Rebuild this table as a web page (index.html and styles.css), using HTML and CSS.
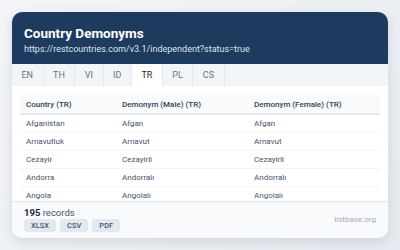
FILE: index.html
```html
<!DOCTYPE html>
<html lang="en">
<head>
    <meta charset="UTF-8">
    <meta name="viewport" content="width=device-width, initial-scale=1.0">
    <title>Country Demonyms</title>
    <link rel="stylesheet" href="styles.css">
</head>
<body>

<div class="card">
    <div class="card-header">
        <h1>Country Demonyms</h1>
        <div class="source-url">https://restcountries.com/v3.1/independent?status=true</div>
    </div>

    <div class="tabs">
        <span class="tab">EN</span>
        <span class="tab">TH</span>
        <span class="tab">VI</span>
        <span class="tab">ID</span>
        <span class="tab active">TR</span>
        <span class="tab">PL</span>
        <span class="tab">CS</span>
    </div>

    <div class="table-wrap">
        <table>
            <thead>
                <tr>
                    <th class="col-country">Country (TR)</th>
                    <th class="col-male">Demonym (Male) (TR)</th>
                    <th>Demonym (Female) (TR)</th>
                </tr>
            </thead>
            <tbody>
                <tr><td>Afganistan</td><td>Afgan</td><td>Afgan</td></tr>
                <tr><td>Arnavutluk</td><td>Arnavut</td><td>Arnavut</td></tr>
                <tr><td>Cezayir</td><td>Cezayirli</td><td>Cezayirli</td></tr>
                <tr><td>Andorra</td><td>Andorralı</td><td>Andorralı</td></tr>
                <tr><td>Angola</td><td>Angolalı</td><td>Angolalı</td></tr>
            </tbody>
        </table>
    </div>

    <div class="card-footer">
        <div class="footer-left">
            <div class="record-count"><b>195</b> records</div>
            <div class="exports">
                <span class="export-btn">XLSX</span>
                <span class="export-btn">CSV</span>
                <span class="export-btn">PDF</span>
            </div>
        </div>
        <span class="brand">listbase.org</span>
    </div>
</div>

</body>
</html>
```

FILE: styles.css
```css
body {
    font-family: Roboto, Arial, sans-serif;
    background: linear-gradient(135deg, #f3f5f8, #e6eaf0);
    margin: 0;
    padding: 12px;
    height: 250px;
    box-sizing: border-box;
}

.card {
    height: 226px;
    display: flex;
    flex-direction: column;
    background-color: #fff;
    border-radius: 10px;
    overflow: hidden;
    box-shadow: 0 4px 12px rgba(30, 41, 59, 0.12);
}

.card-header {
    background-color: #1e3a5f;
    color: #fff;
    padding: 12px 12px 8px;
}

.card-header h1 {
    margin: 0;
    font-size: 13.5px;
    font-weight: 700;
    line-height: 18px;
}

.source-url {
    font-size: 9px;
    line-height: 14px;
    color: #dce5f2;
}

.tabs {
    display: flex;
    height: 22px;
    background-color: #f1f5f9;
}

.tab {
    display: flex;
    align-items: center;
    padding: 0 9.5px;
    font-size: 9px;
    color: #64748b;
    border-right: 1px solid #e2e8f0;
}

.tab.active {
    background-color: #fff;
    color: #1e293b;
}

.table-wrap {
    flex: 1;
    overflow: hidden;
    padding: 9px 8px 0;
}

table {
    width: 100%;
    border-collapse: collapse;
    font-size: 8px;
}

th {
    text-align: left;
    font-weight: 500;
    color: #334155;
    background-color: #f8fafc;
    height: 18px;
    padding: 0 6px;
    border-bottom: 2px solid #e2e8f0;
}

.col-country {
    width: 84px;
}

.col-male {
    width: 120px;
}

td {
    color: #475569;
    height: 17px;
    padding: 0 6px;
    border-bottom: 1px solid #f1f5f9;
}

.card-footer {
    display: flex;
    align-items: center;
    justify-content: space-between;
    background-color: #f8fafc;
    border-top: 1px solid #e2e8f0;
    padding: 5px 12px 6px;
}

.record-count {
    font-size: 9.5px;
    line-height: 12px;
    color: #475569;
}

.record-count b {
    color: #1e293b;
    font-weight: 700;
}

.exports {
    display: flex;
    gap: 4px;
}

.export-btn {
    font-size: 7.5px;
    font-weight: 500;
    line-height: 13px;
    padding: 0 7px;
    border-radius: 3px;
    background-color: #e2e8f0;
    color: #475569;
}

.brand {
    font-size: 8px;
    color: #a7a9bc;
}
```
